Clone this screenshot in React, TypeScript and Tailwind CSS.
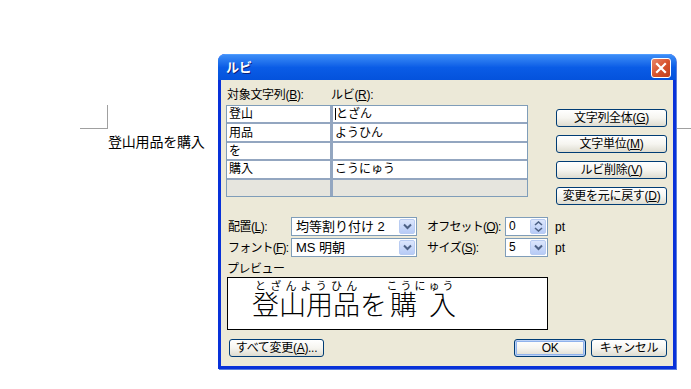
import React from "react";

const F = { fontFamily: '"Liberation Sans", "Noto Sans CJK JP", sans-serif' };

function Chevron() {
  return (
    <svg width="9" height="7" viewBox="0 0 9 7">
      <path d="M1 1.5 L4.5 5 L8 1.5" fill="none" stroke="#4D6185" strokeWidth="2" />
    </svg>
  );
}

function DropBtn() {
  return (
    <div className="w-[16px] h-full flex items-center justify-center rounded-[2px] border border-[#B9CCF2] bg-gradient-to-b from-[#DCE6FC] to-[#B7CBF6]">
      <Chevron />
    </div>
  );
}

function SpinBtn() {
  return (
    <div className="w-[16px] h-full flex flex-col rounded-[2px] border border-[#B9CCF2] bg-gradient-to-b from-[#DCE6FC] to-[#B7CBF6] items-center justify-center gap-[1px]">
      <svg width="9" height="5" viewBox="0 0 9 5">
        <path d="M1 4 L4.5 1 L8 4" fill="none" stroke="#4D6185" strokeWidth="1.6" />
      </svg>
      <svg width="9" height="5" viewBox="0 0 9 5">
        <path d="M1 1 L4.5 4 L8 1" fill="none" stroke="#4D6185" strokeWidth="1.6" />
      </svg>
    </div>
  );
}

function XPButton({ children, w, def }: { children: React.ReactNode; w: string; def?: boolean }) {
  return (
    <div className={`${w} h-[18px] rounded-[3px] border border-[#003C74] bg-gradient-to-b from-[#FFFFFF] via-[#F6F5F0] to-[#DEDCD0] flex items-center justify-center text-[12px] leading-none text-black whitespace-nowrap tracking-[-0.3px] ${def ? "shadow-[inset_0_0_0_1px_#BCD2F6,inset_0_0_0_2px_#8FB2EC]" : ""}`}>
      {children}
    </div>
  );
}

function Cell({ children, grey }: { children?: React.ReactNode; grey?: boolean }) {
  return (
    <div className={`${grey ? "bg-[#E6E5DE]" : "bg-white"} pl-[2px] text-[12px] leading-none flex items-center`}>
      {children}
    </div>
  );
}

export default function App() {
  return (
    <div className="w-[691px] h-[389px] bg-white relative overflow-hidden" style={F}>
      {/* document page */}
      <div className="pt-[105px] pl-[80px]">
        <div className="w-[28px] h-[24px] border-r border-b border-[#A0A0A0]" />
        <div className="pl-[28px] mt-[4px] text-[14px] leading-[18px] text-black tracking-[-0.2px]">登山用品を購入</div>
      </div>
      <div className="absolute left-[670px] top-[128px] w-[21px] h-px bg-[#A0A0A0]" />

      {/* dialog */}
      <div className="absolute left-[218px] top-[54px] w-[458px] h-[315px] flex flex-col rounded-t-[7px] bg-[#0831D9] shadow-[1px_1px_0_#5A7EDC]">
        {/* title bar */}
        <div className="h-[26px] shrink-0 rounded-t-[7px] bg-gradient-to-b from-[#3B8CF6] via-[#0A5CE6] to-[#0452DC] flex items-center pl-[8px] pr-[5px] border-t border-[#4F9CFF]">
          <span className="text-white font-bold text-[13px] [text-shadow:1px_1px_0_#0A1F7A]">ルビ</span>
          <div className="ml-auto w-[20px] h-[20px] rounded-[3px] border border-white bg-gradient-to-br from-[#E8866A] via-[#D8532D] to-[#C0401C] flex items-center justify-center">
            <svg width="12" height="12" viewBox="0 0 12 12">
              <path d="M2 2 L10 10 M10 2 L2 10" stroke="white" strokeWidth="2.2" strokeLinecap="square" />
            </svg>
          </div>
        </div>
        {/* body */}
        <div className="mx-[3px] mb-[3px] flex-1 bg-[#ECE9D8] flex flex-col px-[5px] pt-[8px] text-black">
          <div className="flex">
            <div className="flex flex-col w-[302px]">
              <div className="h-[15px] flex text-[12px] leading-[15px] whitespace-nowrap tracking-[-0.3px]">
                <span className="w-[105px] pl-[1px]">対象文字列(<u>B</u>):</span>
                <span>ルビ(<u>R</u>):</span>
              </div>
              <div className="mt-[2px] h-[92px] border border-[#7F9DB9] bg-[#93A6C0] grid grid-cols-[103px_1fr] grid-rows-5 gap-x-[3px] gap-y-[2px]">
                <Cell>登山</Cell>
                <Cell><span className="border-l border-black">とざん</span></Cell>
                <Cell>用品</Cell>
                <Cell>ようひん</Cell>
                <Cell>を</Cell>
                <Cell />
                <Cell>購入</Cell>
                <Cell>こうにゅう</Cell>
                <Cell grey />
                <Cell grey />
              </div>
            </div>
            <div className="ml-[28px] pt-[21px] flex flex-col gap-[8px]">
              <XPButton w="w-[111px]">文字列全体(<u>G</u>)</XPButton>
              <XPButton w="w-[111px]">文字単位(<u>M</u>)</XPButton>
              <XPButton w="w-[111px]">ルビ削除(<u>V</u>)</XPButton>
              <XPButton w="w-[111px]">変更を元に戻す(<u>D</u>)</XPButton>
            </div>
          </div>

          {/* settings */}
          <div className="mt-[12px] flex items-center h-[19px] text-[12px] whitespace-nowrap">
            <span className="w-[65px] pl-[2px] tracking-[-0.5px]">配置(<u>L</u>):</span>
            <div className="w-[126px] h-[19px] border border-[#7F9DB9] bg-white flex items-stretch p-[1px]">
              <span className="flex-1 pl-[3px] leading-[15px] text-[13px]">均等割り付け 2</span>
              <DropBtn />
            </div>
            <span className="w-[88px] pl-[10px] tracking-[-0.8px]">オフセット(<u>O</u>):</span>
            <div className="w-[43px] h-[19px] border border-[#7F9DB9] bg-white flex items-stretch p-[1px]">
              <span className="flex-1 pl-[2px] leading-[15px]">0</span>
              <SpinBtn />
            </div>
            <span className="pl-[7px]">pt</span>
          </div>
          <div className="mt-[2px] flex items-center h-[19px] text-[12px] whitespace-nowrap">
            <span className="w-[65px] pl-[2px] tracking-[-0.8px]">フォント(<u>F</u>):</span>
            <div className="w-[126px] h-[19px] border border-[#7F9DB9] bg-white flex items-stretch p-[1px]">
              <span className="flex-1 pl-[3px] leading-[15px] text-[13px]">MS 明朝</span>
              <DropBtn />
            </div>
            <span className="w-[88px] pl-[10px] tracking-[-0.5px]">サイズ(<u>S</u>):</span>
            <div className="w-[43px] h-[19px] border border-[#7F9DB9] bg-white flex items-stretch p-[1px]">
              <span className="flex-1 pl-[2px] leading-[15px]">5</span>
              <DropBtn />
            </div>
            <span className="pl-[7px]">pt</span>
          </div>

          {/* preview */}
          <div className="mt-[5px] h-[14px] text-[12px] leading-[14px] pl-[1px] tracking-[-0.5px]">プレビュー</div>
          <div className="mt-[1px] ml-[1px] w-[321px] h-[53px] border border-black bg-white flex flex-col">
            <div className="mt-[2px] h-[13px] flex text-[11px] leading-[13px]">
              <span className="ml-[27px] tracking-[4.2px]">とざんようひん</span>
              <span className="ml-[25px] tracking-[3px]">こうにゅう</span>
            </div>
            <div className="h-[28px] flex text-[27px] leading-[27px] font-light">
              <span className="ml-[24px]">登山用品を</span>
              <span className="ml-[3px]">購</span>
              <span className="ml-[12px]">入</span>
            </div>
          </div>

          {/* bottom buttons */}
          <div className="mt-[9px] flex">
            <div className="ml-[3px]">
              <XPButton w="w-[95px]">すべて変更(<u>A</u>)...</XPButton>
            </div>
            <div className="ml-auto mr-[1px] flex gap-[5px]">
              <XPButton w="w-[72px]" def>OK</XPButton>
              <XPButton w="w-[76px]">キャンセル</XPButton>
            </div>
          </div>
        </div>
      </div>
    </div>
  );
}
